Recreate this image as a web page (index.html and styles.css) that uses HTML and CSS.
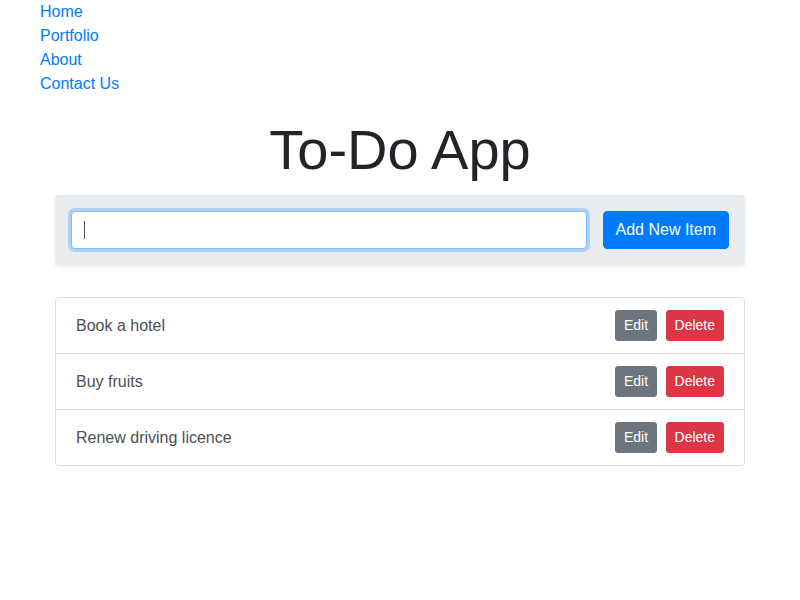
FILE: index.html
```html
<!DOCTYPE html>
<html lang="en">
<head>
<meta charset="utf-8">
<title>To-Do App</title>
<link rel="stylesheet" href="styles.css">
</head>
<body>
<nav>
  <ul class="nav-list">
    <li><a href="#">Home</a></li>
    <li><a href="#">Portfolio</a></li>
    <li><a href="#">About</a></li>
    <li><a href="#">Contact Us</a></li>
  </ul>
</nav>
<main class="container">
  <h1 class="title">To-Do App</h1>
  <form class="add-box" onsubmit="return false">
    <span class="input-wrap"><input class="add-input" type="text" autofocus></span>
    <button class="btn btn-primary" type="submit">Add New Item</button>
  </form>
  <ul class="list">
    <li class="item">
      <span class="item-text">Book a hotel</span>
      <span class="actions"><button class="btn btn-sm btn-secondary">Edit</button><button class="btn btn-sm btn-danger">Delete</button></span>
    </li>
    <li class="item">
      <span class="item-text">Buy fruits</span>
      <span class="actions"><button class="btn btn-sm btn-secondary">Edit</button><button class="btn btn-sm btn-danger">Delete</button></span>
    </li>
    <li class="item">
      <span class="item-text">Renew driving licence</span>
      <span class="actions"><button class="btn btn-sm btn-secondary">Edit</button><button class="btn btn-sm btn-danger">Delete</button></span>
    </li>
  </ul>
</main>
</body>
</html>
```
FILE: styles.css
```css
* { box-sizing: border-box; }
body {
  margin: 0;
  font-family: "Liberation Sans", Arial, sans-serif;
  font-size: 16px;
  line-height: 1.5;
  color: #212529;
  background: #fff;
}
.nav-list {
  list-style: none;
  margin: 0;
  padding: 0 0 0 40px;
}
.nav-list a {
  color: #007bff;
  text-decoration: none;
}
.container {
  width: 720px;
  margin: 0 auto;
  padding: 0 15px;
}
.title {
  font-size: 56px;
  font-weight: 400;
  line-height: 1.2;
  text-align: center;
  margin: 20px 0 12px;
}
.add-box {
  display: flex;
  gap: 16px;
  padding: 16px;
  background: #e9ecef;
  border-radius: 4px;
  box-shadow: 0 2px 4px rgba(0,0,0,.075);
  margin: 0 0 32px;
}
.input-wrap {
  position: relative;
  flex: 1;
  display: flex;
}
.input-wrap::after {
  content: "";
  position: absolute;
  left: 13px;
  top: 10px;
  width: 1px;
  height: 18px;
  background: #495057;
}
.add-input {
  flex: 1;
  height: 38px;
  padding: 6px 12px;
  font: inherit;
  color: #495057;
  background: #fff;
  border: 1px solid #80bdff;
  border-radius: 4px;
  outline: 0;
  caret-color: transparent;
  box-shadow: 0 0 0 3px rgba(0,123,255,.25);
}
.btn {
  font-family: inherit;
  border: 1px solid transparent;
  color: #fff;
  cursor: pointer;
}
.btn-primary {
  height: 38px;
  padding: 6px 12px;
  font-size: 16px;
  line-height: 24px;
  border-radius: 4px;
  background: #007bff;
  border-color: #007bff;
}
.btn-sm {
  height: 31px;
  padding: 4px 8px;
  font-size: 14px;
  line-height: 21px;
  border-radius: 3px;
}
.btn-secondary { background: #6c757d; border-color: #6c757d; padding: 4px 7.5px; }
.btn-danger { background: #dc3545; border-color: #dc3545; }
.list {
  list-style: none;
  margin: 0;
  padding: 0;
  border: 1px solid rgba(0,0,0,.125);
  border-radius: 4px;
}
.item {
  display: flex;
  align-items: center;
  justify-content: space-between;
  padding: 12px 20px;
  color: #495057;
}
.item + .item { border-top: 1px solid rgba(0,0,0,.125); }
.actions { display: flex; gap: 9px; }
```
